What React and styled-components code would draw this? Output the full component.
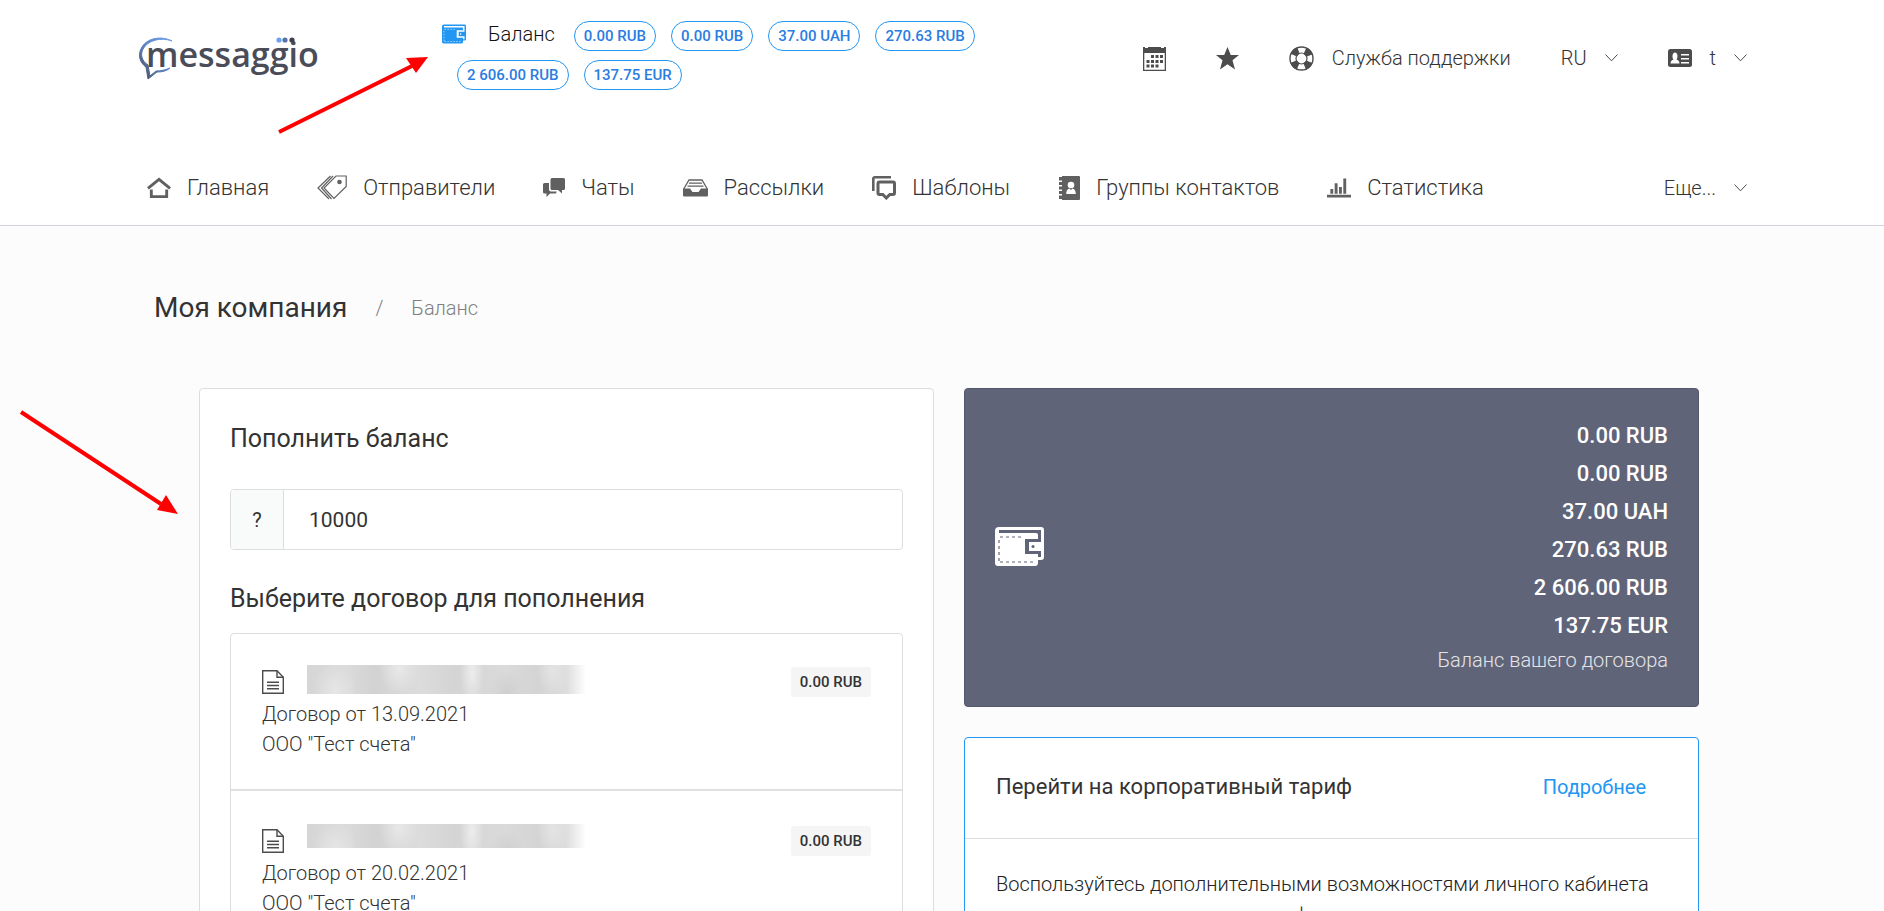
import React from 'react'
import styled, { createGlobalStyle, css } from 'styled-components'

const GlobalStyle = createGlobalStyle`
	*, *::before, *::after {
		box-sizing: border-box;
	}

	body {
		margin: 0;
		background: #fcfcfc;
		color: #222;
		font-family: Roboto, 'Noto Sans', sans-serif;
		font-size: 20px;
		font-weight: 300;
		line-height: 30px;
	}

	button, input {
		font: inherit;
		color: inherit;
	}
`

const Page = styled.div`
	position: relative;
	height: 100vh;
	overflow-y: auto;
	scrollbar-width: none;
`

const Container = styled.div`
	max-width: 1610px;
	margin: 0 auto;
`

const Header = styled.header`
	background: #fff;
	border-bottom: 1px solid #d2d2dc;
`

const TopRow = styled(Container)`
	display: flex;
	align-items: center;
	min-height: 116px;
	padding-left: 2px;
`

const LogoLink = styled.a`
	flex-shrink: 0;
	display: block;
	height: 44px;
	margin-right: 122px;
`

const Balance = styled.div`
	display: flex;
	flex-wrap: wrap;
	align-items: flex-start;
	align-self: flex-start;
	row-gap: 9px;
	max-width: 560px;
	padding-top: 21px;
	color: #111;
`

const BalanceLink = styled.a`
	display: flex;
	align-items: center;
	gap: 22px;
	margin-right: 4px;
	color: inherit;
	line-height: 26px;
	text-decoration: none;
`

const BlueIcon = styled.span`
	display: flex;
	color: #2196f3;
`

const Pill = styled.span`
	height: 30px;
	margin-left: 15px;
	padding: 0 9px;
	border: 1px solid #2196f3;
	border-radius: 15px;
	color: #2a7de1;
	font-size: 15px;
	font-weight: 500;
	line-height: 28px;
	white-space: nowrap;
`

const Tools = styled.div`
	display: flex;
	align-items: center;
	gap: 50px;
	margin-left: auto;
`

const ToolButton = styled.button`
	display: flex;
	align-items: center;
	gap: 18px;
	padding: 0;
	border: 0;
	background: none;
	color: #333;
	white-space: nowrap;
	cursor: pointer;

	svg {
		color: #4c4c4c;
	}
`

const Nav = styled(Container).attrs({ as: 'nav' })`
	display: flex;
	align-items: center;
	gap: 48px;
	padding: 53px 0 19px 10px;
`

const NavLink = styled.a`
	display: flex;
	align-items: center;
	gap: 16px;
	height: 37px;
	color: #333;
	font-size: 22px;
	white-space: nowrap;
	text-decoration: none;

	svg {
		color: #606060;
	}
`

const MoreButton = styled(ToolButton)`
	margin-left: auto;
`

const Breadcrumb = styled.nav`
	display: flex;
	align-items: center;
	gap: 28px;
	padding: 64px 17px 62px;
	color: #808080;
`

const Title = styled.h1`
	margin: 0;
	color: #333;
	font-size: 28px;
	font-weight: 400;
	line-height: 36px;
`

const Columns = styled.main`
	display: grid;
	grid-template-columns: 1fr 1fr;
	align-items: start;
	gap: 30px;
	padding: 0 48px 30px 62px;
`

const SideColumn = styled.div`
	display: grid;
	gap: 30px;
`

const Card = styled.section`
	border: 1px solid #ddd;
	border-radius: 4px;
	background: #fff;

	${props => props.$accent && css`
		border-color: #2196f3;
	`}
`

const PaymentCard = styled(Card)`
	padding: 34px 30px 30px;
`

const CardTitle = styled.h2`
	margin: 0;
	color: #333;
	font-size: 25px;
	font-weight: 400;
	line-height: 32px;
`

const AmountField = styled.div`
	display: flex;
	height: 61px;
	margin: 34px 0 33px;
	border: 1px solid #ddd;
	border-radius: 4px;
	overflow: hidden;
	color: #333;
	font-weight: 400;
`

const Addon = styled.label`
	display: flex;
	align-items: center;
	justify-content: center;
	width: 53px;
	border-right: 1px solid #ddd;
	background: #f9fafa;
`

const AmountInput = styled.input`
	flex: 1;
	min-width: 0;
	padding: 0 25px;
	border: 0;
	outline: none;
	background: none;
	font-size: 21px;
`

const ContractList = styled.ul`
	margin: 18px 0 0;
	padding: 0;
	border: 1px solid #ddd;
	border-radius: 4px;
	list-style: none;
`

const Contract = styled.li`
	padding: 31px 31px 30px;
	color: #333;

	& + & {
		padding-top: 33px;
		border-top: 2px solid #e0e0e0;
	}
`

const ContractHead = styled.div`
	display: flex;
	align-items: center;
	height: 34px;
	color: #4c4c4c;
`

const HiddenNumber = styled.div`
	align-self: flex-start;
	width: 282px;
	height: ${props => props.$height}px;
	margin-left: 23px;
	background:
		linear-gradient(90deg, transparent 92%, #fff 99%),
		radial-gradient(ellipse 22px 30px at 28px 26px, #e6e6e6, transparent),
		radial-gradient(ellipse 20px 26px at 92px 4px, #e8e8e8, transparent),
		radial-gradient(ellipse 12px 34px at 165px 8px, #ededed, transparent),
		radial-gradient(ellipse 18px 22px at 200px 28px, #cfcfcf, transparent),
		radial-gradient(ellipse 16px 24px at 246px 6px, #e4e4e4, transparent),
		linear-gradient(90deg, #d6d6d6, #dadada 15%, #d2d2d2 24%, #dcdcdc 40%, #d4d4d4 52%, #dadada 70%, #d4d4d4 82%, #ddd 92%);
`

const Badge = styled.span`
	margin-left: auto;
	padding: 0 9px;
	border-radius: 3px;
	background: #f5f5f5;
	color: #333;
	font-size: 15px;
	font-weight: 500;
`

const Summary = styled(Card)`
	display: flex;
	align-items: center;
	justify-content: space-between;
	padding: 28px 30px 31px;
	border-color: #54586d;
	background: #606478;
	color: #fff;
	text-align: right;
`

const Sum = styled.div`
	font-size: 22px;
	font-weight: 500;
	line-height: 38px;
`

const SumNote = styled.div`
	color: #e4e4e8;
`

const PlanHead = styled.div`
	display: flex;
	align-items: baseline;
	justify-content: space-between;
	padding: 31px 52px 33px 31px;
	border-bottom: 1px solid #ddd;
`

const PlanTitle = styled.h2`
	margin: 0;
	color: #333;
	font-size: 22px;
	font-weight: 400;
	line-height: 36px;
`

const PlanLink = styled.a`
	color: #2196f3;
	font-weight: 400;
	text-decoration: none;
`

const PlanText = styled.p`
	margin: 0;
	padding: 30px 31px;
	line-height: 31px;
`

const Arrows = styled.svg`
	position: absolute;
	top: 0;
	left: 0;
	pointer-events: none;
`

const LogoMark = styled.svg`
	display: block;
	overflow: visible;
`

const Logo = () => (
	<LogoMark width="181" height="44" viewBox="0 0 181 44">
		<defs>
			<linearGradient id="bubble" x1="1" y1="0" x2="0" y2="1">
				<stop offset="0" stopColor="#6fa0ee" />
				<stop offset="0.5" stopColor="#5b83c4" />
				<stop offset="1" stopColor="#484b5a" />
			</linearGradient>
		</defs>
		<path d="M33 5C24 0 9 1 3 11c-5 8-2 16 4 20l2 12 9-7c5 0 10-1 13-4-5 2-9 3-14 3l-6 5-2-11C3 25 1 19 4 13 9 4 22 1 33 5z" fill="url(#bubble)" stroke="url(#bubble)" strokeWidth="1" />
		<text x="7" y="31" fill="#4a4c58" fontFamily="'Open Sans', 'Noto Sans', sans-serif" fontSize="34" fontWeight="600">messaggio</text>
		<circle cx="140" cy="4" r="2.600" fill="#6fa0ee" />
		<circle cx="146" cy="4" r="2.600" fill="#5673ad" />
		<circle cx="153" cy="4" r="2.600" fill="#3c3f4e" />
	</LogoMark>
)

const WalletIcon = ({ width, height, hole }) => (
	<svg width={width} height={height} viewBox="0 0 49 39" fill="none">
		<path d="M4 0h42a3 3 0 0 1 3 3v27a3 3 0 0 1-3 3h-3v3a3 3 0 0 1-3 3H3a3 3 0 0 1-3-3V4a4 4 0 0 1 4-4z" fill="currentColor" />
		<path d="M4 3h42v9h-3V8a2 2 0 0 0-2-2H4z" fill={hole} />
		<path d="M30 12h16v3H34v9h12v6h-3v-3H30z" fill={hole} />
		<circle cx="38" cy="19.500" r="1.500" fill={hole} />
		<path d="M5 10h21M5 35h33M4 13v21" stroke={hole} strokeWidth="1.200" strokeDasharray="3 3" />
	</svg>
)

const CalendarIcon = () => (
	<svg width="23" height="25" viewBox="0 0 23 25">
		<path d="M0 1h2v1h3V1h13v1h3V1h2v24H0zM1.300 7v16.700h20.400V7z" fill="currentColor" fillRule="evenodd" />
		<path d="M8 9h3v3H8zM12.500 9h3v3h-3zM17 9h3v3h-3zM3.500 14h3v3h-3zM8 14h3v3H8zM12.500 14h3v3h-3zM17 14h3v3h-3zM3.500 18.500h3v3h-3zM8 18.500h3v3H8zM12.500 18.500h3v3h-3z" fill="currentColor" />
	</svg>
)

const StarIcon = () => (
	<svg width="23" height="23" viewBox="0 0 23 23">
		<path d="M11.500 0l3.300 8H23l-6.500 5.300L19 22.500l-7.500-5.300L4 22.500l2.500-9.200L0 8h8.200z" fill="currentColor" />
	</svg>
)

const SupportIcon = () => (
	<svg width="25" height="25" viewBox="0 0 25 25" fill="none" stroke="currentColor">
		<circle cx="12.500" cy="12.500" r="8.500" strokeWidth="7" strokeDasharray="6.676" strokeDashoffset="-3.338" />
		<circle cx="12.500" cy="12.500" r="11.500" strokeWidth="1.400" />
		<circle cx="12.500" cy="12.500" r="5.500" strokeWidth="1.200" />
	</svg>
)

const IdCardIcon = () => (
	<svg width="24" height="18" viewBox="0 0 24 18">
		<rect width="24" height="18" rx="2.500" fill="currentColor" />
		<path d="M2.500 14.500c0-2.500 1.500-3.500 3-4C4 9 4 3.500 7 3.500S10 9 8.500 10.500c1.500.5 3 1.500 3 4zM13 5h8v1.500h-8zM13 9h8v1.500h-8zM13 13h8v1.500h-8z" fill="#fff" />
	</svg>
)

const Chevron = () => (
	<svg width="13" height="8" viewBox="0 0 13 8" fill="none" stroke="currentColor">
		<path d="M.5.500l6 6.300 6-6.300" />
	</svg>
)

const HomeIcon = () => (
	<svg width="24" height="22" viewBox="0 0 25 22" fill="none" stroke="currentColor" strokeWidth="3">
		<path d="M1 11.500L12.500 2 24 11.500" />
		<path d="M4.500 12.500V20h16v-7.500" />
	</svg>
)

const TagsIcon = () => (
	<svg width="30" height="25" viewBox="0 0 30 25" fill="none" stroke="currentColor" strokeWidth="1.200">
		<path d="M29.200 1v10.500L17 23.500 7 13 19 1z" />
		<path d="M16 1L4.500 13 14.500 24M13.500 1L1 13l11 11" />
		<circle cx="22.500" cy="7" r="2.300" fill="currentColor" stroke="none" />
	</svg>
)

const ChatIcon = () => (
	<svg width="22" height="20" viewBox="0 0 22 20" fill="currentColor">
		<path d="M9 0h11.500A1.500 1.500 0 0 1 22 1.500v9a1.500 1.500 0 0 1-1.500 1.500H19v3.500L15 12H9a1.500 1.500 0 0 1-1.500-1.500v-9A1.500 1.500 0 0 1 9 0z" />
		<path d="M1.500 5H6v6.500A2 2 0 0 0 8 13.500h5.500V14a1.500 1.500 0 0 1-1.500 1.500H7L3.500 19v-3.500h-2A1.500 1.500 0 0 1 0 14V6.500A1.500 1.500 0 0 1 1.500 5z" />
	</svg>
)

const InboxIcon = () => (
	<svg width="25" height="18" viewBox="0 0 25 18" fill="none" stroke="currentColor" strokeWidth="1.300">
		<path d="M.7 10L6 1h13l5.300 9" />
		<path d="M6 4.200h13M4.500 7.200h16" />
		<path d="M0 9.500h7l2.500 3.500h6L18 9.500h7v7a1 1 0 0 1-1 1H1a1 1 0 0 1-1-1z" fill="currentColor" stroke="none" />
	</svg>
)

const TemplatesIcon = () => (
	<svg width="24" height="24" viewBox="0 0 24 24" fill="none" stroke="currentColor">
		<path d="M1.300 15V2.800a1.500 1.500 0 0 1 1.500-1.500H19" strokeWidth="2.600" />
		<path d="M7.500 6H21a1.500 1.500 0 0 1 1.500 1.500v9.500a1.500 1.500 0 0 1-1.500 1.500h-3.200l-3.500 3.500-3.500-3.500H7.500A1.500 1.500 0 0 1 6 17V7.500A1.500 1.500 0 0 1 7.500 6z" strokeWidth="3" />
	</svg>
)

const ContactsIcon = () => (
	<svg width="22" height="24" viewBox="0 0 22 24">
		<path d="M4 0h17a1 1 0 0 1 1 1v22a1 1 0 0 1-1 1H4z" fill="currentColor" />
		<path d="M1 1h3v3.500H1zM1 6h3v3H1zM1 10.500h3v3H1zM1 15h3v3H1zM1 19.500h3V23H1z" fill="currentColor" />
		<circle cx="13" cy="9" r="3.300" fill="#fff" />
		<path d="M8.200 18c0-3.500 1.300-5 3.300-5.500l1.500 1.500 1.500-1.500c2 .5 3.300 2 3.300 5.500z" fill="#fff" />
	</svg>
)

const StatsIcon = () => (
	<svg width="24" height="20" viewBox="0 0 25 20" fill="currentColor">
		<path d="M0 17h25v3H0zM3.500 11h3v5h-3zM8 5h3v11H8zM12.500 9h3v7h-3zM17 0h3v16h-3z" />
	</svg>
)

const DocumentIcon = () => (
	<svg width="22" height="24" viewBox="0 0 22 24" fill="none" stroke="currentColor" strokeWidth="1.400">
		<path d="M.7.700H15l6.300 6.500v16H.7z" />
		<path d="M15 .7v6.500h6.300M5 12.200h12M5 15.500h12M5 18.800h12" />
	</svg>
)

const sums = ['0.00 RUB', '0.00 RUB', '37.00 UAH', '270.63 RUB', '2 606.00 RUB', '137.75 EUR']

const navItems = [
	{ label: 'Главная', Icon: HomeIcon },
	{ label: 'Отправители', Icon: TagsIcon },
	{ label: 'Чаты', Icon: ChatIcon },
	{ label: 'Рассылки', Icon: InboxIcon },
	{ label: 'Шаблоны', Icon: TemplatesIcon },
	{ label: 'Группы контактов', Icon: ContactsIcon },
	{ label: 'Статистика', Icon: StatsIcon },
]

const contracts = [
	{ date: '13.09.2021', company: 'ООО "Тест счета"', sum: '0.00 RUB', maskHeight: 29 },
	{ date: '20.02.2021', company: 'ООО "Тест счета"', sum: '0.00 RUB', maskHeight: 24 },
]

const App = () => (
	<Page>
		<GlobalStyle />
		<Header>
			<TopRow>
				<LogoLink href="#">
					<Logo />
				</LogoLink>
				<Balance>
					<BalanceLink href="#balance">
						<BlueIcon>
							<WalletIcon width={24} height={20} hole="#fff" />
						</BlueIcon>
						Баланс
					</BalanceLink>
					{sums.map((sum, i) => <Pill key={i}>{sum}</Pill>)}
				</Balance>
				<Tools>
					<ToolButton aria-label="Календарь"><CalendarIcon /></ToolButton>
					<ToolButton aria-label="Избранное"><StarIcon /></ToolButton>
					<ToolButton><SupportIcon />Служба поддержки</ToolButton>
					<ToolButton aria-haspopup="menu">RU<Chevron /></ToolButton>
					<ToolButton aria-haspopup="menu"><IdCardIcon />t<Chevron /></ToolButton>
				</Tools>
			</TopRow>
			<Nav>
				{navItems.map(({ label, Icon }) => (
					<NavLink href="#" key={label}><Icon />{label}</NavLink>
				))}
				<MoreButton aria-haspopup="menu">Еще...<Chevron /></MoreButton>
			</Nav>
		</Header>
		<Container>
			<Breadcrumb>
				<Title>Моя компания</Title>
				<span>/</span>
				<span>Баланс</span>
			</Breadcrumb>
			<Columns>
				<PaymentCard>
					<CardTitle>Пополнить баланс</CardTitle>
					<AmountField>
						<Addon htmlFor="amount">?</Addon>
						<AmountInput id="amount" type="text" defaultValue="10000" />
					</AmountField>
					<CardTitle>Выберите договор для пополнения</CardTitle>
					<ContractList>
						{contracts.map(({ date, company, sum, maskHeight }) => (
							<Contract key={date}>
								<ContractHead>
									<DocumentIcon />
									<HiddenNumber $height={maskHeight} />
									<Badge>{sum}</Badge>
								</ContractHead>
								<div>Договор от {date}</div>
								<div>{company}</div>
							</Contract>
						))}
					</ContractList>
				</PaymentCard>
				<SideColumn>
					<Summary>
						<WalletIcon width={49} height={39} hole="#606478" />
						<div>
							{sums.map((sum, i) => <Sum key={i}>{sum}</Sum>)}
							<SumNote>Баланс вашего договора</SumNote>
						</div>
					</Summary>
					<Card $accent>
						<PlanHead>
							<PlanTitle>Перейти на корпоративный тариф</PlanTitle>
							<PlanLink href="#plan">Подробнее</PlanLink>
						</PlanHead>
						<PlanText>
							Воспользуйтесь дополнительными возможностями личного кабинета
							на максимально выгодных тарифах
						</PlanText>
					</Card>
				</SideColumn>
			</Columns>
		</Container>
		<Arrows width="440" height="520" viewBox="0 0 440 520" fill="red" stroke="red">
			<path d="M279 132L412 66M21 412l140 92" strokeWidth="4" />
			<path d="M428 57l-22 1 10 15zM178 514l-12-19-9 15z" stroke="none" />
		</Arrows>
	</Page>
)

export default App
